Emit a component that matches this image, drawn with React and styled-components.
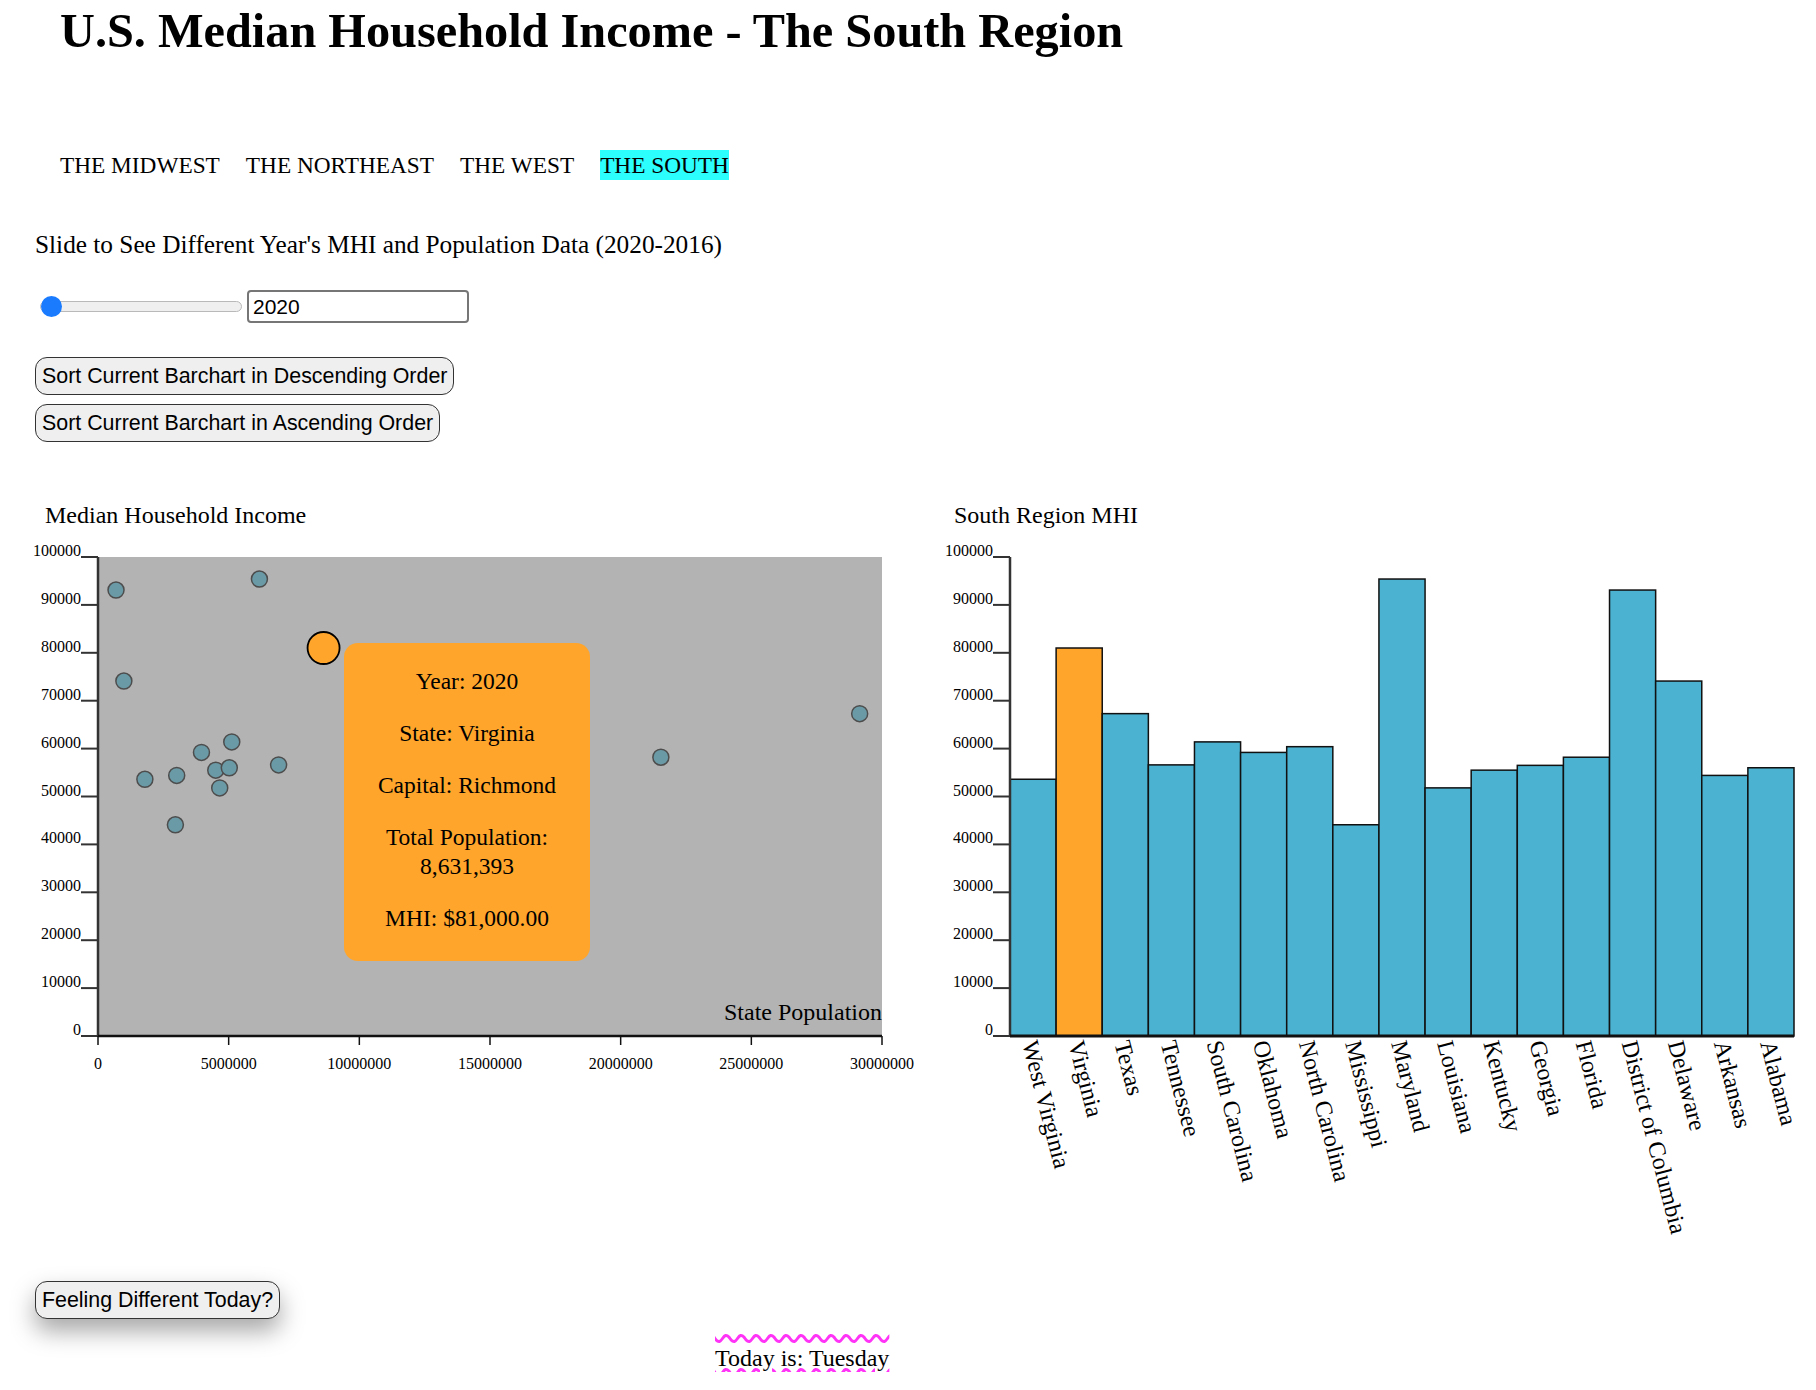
import styled, { createGlobalStyle } from "styled-components";

const GlobalStyle = createGlobalStyle`
html { overflow: hidden; }
body {
  margin: 0;
  font-family: "Liberation Serif", "Times New Roman", serif;
  color: #000;
  background: #fff;
}
`;

const PLOT_W = 784;
const PLOT_H = 479;
const ORANGE = "#ffa52b";

const states = [
  { name: "West Virginia", mhi: 53600, pop: 1793716 },
  { name: "Virginia", mhi: 81000, pop: 8631393, capital: "Richmond" },
  { name: "Texas", mhi: 67300, pop: 29145505 },
  { name: "Tennessee", mhi: 56600, pop: 6910840 },
  { name: "South Carolina", mhi: 61400, pop: 5118425 },
  { name: "Oklahoma", mhi: 59200, pop: 3959353 },
  { name: "North Carolina", mhi: 60400, pop: 10439388 },
  { name: "Mississippi", mhi: 44100, pop: 2961279 },
  { name: "Maryland", mhi: 95400, pop: 6177224 },
  { name: "Louisiana", mhi: 51800, pop: 4657757 },
  { name: "Kentucky", mhi: 55500, pop: 4505836 },
  { name: "Georgia", mhi: 56500, pop: 10711908 },
  { name: "Florida", mhi: 58200, pop: 21538187 },
  { name: "District of Columbia", mhi: 93100, pop: 689545 },
  { name: "Delaware", mhi: 74100, pop: 989948 },
  { name: "Arkansas", mhi: 54400, pop: 3011524 },
  { name: "Alabama", mhi: 56000, pop: 5024279 },
];

const yTicks = [0, 10000, 20000, 30000, 40000, 50000, 60000, 70000, 80000, 90000, 100000];
const xTicks = [0, 5000000, 10000000, 15000000, 20000000, 25000000, 30000000];

const Page = styled.div`
  padding-left: 35px;
`;

const Header = styled.header`
  padding-left: 25px;
`;

const Title = styled.h1`
  margin: 4px 0 0;
  font-size: 48.3px;
  line-height: 53px;
  font-weight: bold;
`;

const Nav = styled.nav`
  margin-top: 93px;
  display: flex;
  gap: 26px;
`;

const NavItem = styled.span`
  font-size: 23.3px;
  line-height: 30px;
  background: ${(p) => (p.$active ? "#2cfdfd" : "transparent")};
`;

const Prompt = styled.p`
  margin: 50px 0 0;
  font-size: 25.3px;
  line-height: 28px;
`;

const SliderRow = styled.div`
  margin-top: 32px;
  height: 33px;
  display: flex;
  align-items: center;
  gap: 5px;
`;

const Range = styled.input`
  -webkit-appearance: none;
  appearance: none;
  width: 202px;
  height: 11px;
  margin: 0 0 0 5px;
  box-sizing: border-box;
  background: #efefef;
  border: 1px solid #b9b9b9;
  border-radius: 6px;

  &::-webkit-slider-thumb {
    -webkit-appearance: none;
    width: 21px;
    height: 21px;
    border-radius: 50%;
    background: #1a7bff;
    border: none;
  }
`;

const YearInput = styled.input`
  width: 222px;
  height: 33px;
  box-sizing: border-box;
  border: 2px solid #767676;
  border-radius: 4px;
  padding: 0 4px;
  font: 21px "Liberation Sans", Arial, sans-serif;
  color: #000;
`;

const ButtonStack = styled.div`
  margin-top: 34px;
  display: flex;
  flex-direction: column;
  align-items: flex-start;
  gap: 9px;
`;

const Button = styled.button`
  font: 21.4px/24px "Liberation Sans", Arial, sans-serif;
  color: #000;
  padding: 6px 6px;
  background: #efefef;
  border: 1.5px solid #333;
  border-radius: 12px;
  box-shadow: ${(p) => (p.$lifted ? "0 12px 24px rgba(0, 0, 0, 0.35)" : "none")};
`;

const ChartsRow = styled.section`
  margin-top: 60px;
  display: flex;
  gap: 29px;
`;

const ChartPanel = styled.div`
  display: flex;
  flex-direction: column;
`;

const ChartTitle = styled.h3`
  margin: 0 0 0 10px;
  font-size: 24px;
  line-height: 27px;
  font-weight: normal;
`;

const PlotWrap = styled.div`
  position: relative;
`;

const Chart = styled.svg`
  display: block;
  overflow: visible;
`;

const TickText = styled.text`
  font-family: "Liberation Serif", "Times New Roman", serif;
  font-size: 16px;
  fill: #000;
`;

const AxisLabel = styled.text`
  font-family: "Liberation Serif", "Times New Roman", serif;
  font-size: 24px;
  fill: #000;
`;

const BarLabel = styled.text`
  font-family: "Liberation Serif", "Times New Roman", serif;
  font-size: 24px;
  fill: #000;
`;

const Tooltip = styled.div`
  position: absolute;
  left: 309px;
  top: 114px;
  width: 246px;
  box-sizing: border-box;
  padding: 24px 12px 28px;
  background: ${ORANGE};
  border-radius: 14px;
  text-align: center;
  font-size: 23.5px;
  line-height: 29px;

  p {
    margin: 0 0 23px;
  }
  p:last-child {
    margin-bottom: 0;
  }
`;

const FooterButton = styled.div`
  margin-top: 36px;
`;

const Today = styled.div`
  margin: 26px 0 0 680px;
  font-size: 24px;
  text-decoration: underline overline wavy #ff33f6;
  text-decoration-thickness: 3px;
  display: inline-block;
`;

function YAxis({ left, top }) {
  return (
    <g>
      <line x1={left} y1={top} x2={left} y2={top + PLOT_H} stroke="#333" strokeWidth="2.5" />
      {yTicks.map((t) => {
        const ty = top + PLOT_H - (t / 100000) * PLOT_H;
        return (
          <g key={t}>
            <line x1={left - 17} y1={ty} x2={left} y2={ty} stroke="#333" strokeWidth="2" />
            <TickText x={left - 17} y={ty - 1} textAnchor="end">
              {t}
            </TickText>
          </g>
        );
      })}
    </g>
  );
}

function Scatter() {
  const L = 63;
  const T = 28;
  const x = (p) => L + (p / 30000000) * PLOT_W;
  const y = (v) => T + PLOT_H - (v / 100000) * PLOT_H;
  const bottom = T + PLOT_H;
  const selected = states.find((s) => s.name === "Virginia");

  return (
    <Chart width="880" height="550">
      <rect x={L} y={T} width={PLOT_W} height={PLOT_H} fill="#b3b3b3" />
      {states
        .filter((s) => s !== selected)
        .map((s) => (
          <circle key={s.name} cx={x(s.pop)} cy={y(s.mhi)} r="8" fill="#6a9aa6" stroke="#4d4d4d" strokeWidth="1.5" />
        ))}
      <circle cx={x(selected.pop)} cy={y(selected.mhi)} r="16" fill={ORANGE} stroke="#000" strokeWidth="1.8" />
      <AxisLabel x={L + PLOT_W} y={bottom - 16} textAnchor="end">
        State Population
      </AxisLabel>
      <YAxis left={L} top={T} />
      <line x1={L} y1={bottom} x2={L + PLOT_W} y2={bottom} stroke="#111" strokeWidth="2.5" />
      {xTicks.map((t) => (
        <g key={t}>
          <line x1={x(t)} y1={bottom} x2={x(t)} y2={bottom + 9} stroke="#111" strokeWidth="1.5" />
          <TickText x={x(t)} y={bottom + 33} textAnchor="middle">
            {t}
          </TickText>
        </g>
      ))}
    </Chart>
  );
}

function Bars() {
  const L = 66;
  const T = 28;
  const bw = PLOT_W / states.length;
  const bottom = T + PLOT_H;

  return (
    <Chart width="860" height="716">
      {states.map((s, i) => {
        const h = (s.mhi / 100000) * PLOT_H;
        return (
          <rect
            key={s.name}
            x={L + i * bw}
            y={bottom - h}
            width={bw}
            height={h}
            fill={s.name === "Virginia" ? ORANGE : "#4bb3d1"}
            stroke="#111"
            strokeWidth="1.5"
          />
        );
      })}
      <YAxis left={L} top={T} />
      <line x1={L} y1={bottom} x2={L + PLOT_W} y2={bottom} stroke="#111" strokeWidth="3" />
      {states.map((s, i) => (
        <BarLabel key={s.name} transform={`translate(${L + i * bw + bw / 2 - 11}, ${bottom + 7}) rotate(75.5)`}>
          {s.name}
        </BarLabel>
      ))}
    </Chart>
  );
}

function App() {
  const regions = ["THE MIDWEST", "THE NORTHEAST", "THE WEST", "THE SOUTH"];
  return (
    <Page>
      <GlobalStyle />
      <Header>
        <Title>U.S. Median Household Income - The South Region</Title>
        <Nav>
          {regions.map((r) => (
            <NavItem key={r} $active={r === "THE SOUTH"}>
              {r}
            </NavItem>
          ))}
        </Nav>
      </Header>

      <Prompt>Slide to See Different Year's MHI and Population Data (2020-2016)</Prompt>
      <SliderRow>
        <Range type="range" min="0" max="4" defaultValue="0" />
        <YearInput type="text" defaultValue="2020" />
      </SliderRow>

      <ButtonStack>
        <Button>Sort Current Barchart in Descending Order</Button>
        <Button>Sort Current Barchart in Ascending Order</Button>
      </ButtonStack>

      <ChartsRow>
        <ChartPanel>
          <ChartTitle>Median Household Income</ChartTitle>
          <PlotWrap>
            <Scatter />
            <Tooltip>
              <p>Year: 2020</p>
              <p>State: Virginia</p>
              <p>Capital: Richmond</p>
              <p>Total Population: 8,631,393</p>
              <p>MHI: $81,000.00</p>
            </Tooltip>
          </PlotWrap>
        </ChartPanel>
        <ChartPanel>
          <ChartTitle>South Region MHI</ChartTitle>
          <Bars />
        </ChartPanel>
      </ChartsRow>

      <FooterButton>
        <Button $lifted>Feeling Different Today?</Button>
      </FooterButton>
      <Today>Today is: Tuesday</Today>
    </Page>
  );
}

export default App;
